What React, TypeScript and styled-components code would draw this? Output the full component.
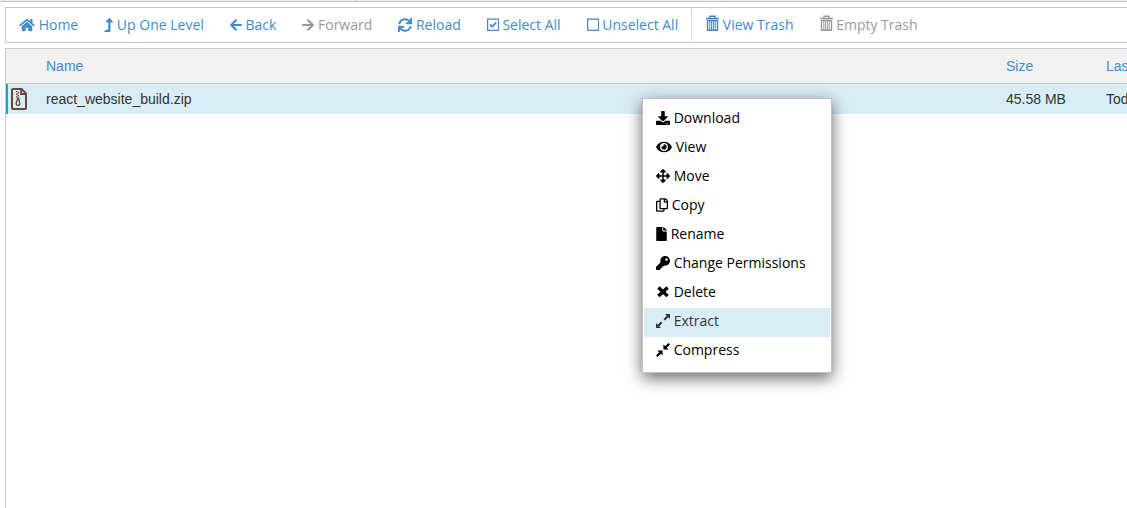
import React from "react";
import styled, { createGlobalStyle } from "styled-components";
import {
  FaHome,
  FaLevelUpAlt,
  FaArrowLeft,
  FaArrowRight,
  FaDownload,
  FaEye,
  FaArrowsAlt,
  FaRegCopy,
  FaFile,
  FaKey,
  FaSync,
} from "react-icons/fa";

const GlobalStyle = createGlobalStyle`
  *, *::before, *::after { box-sizing: border-box; }
  html { height: 100%; }
  body { margin: 0; height: 100%; background: #fff; overflow: hidden; }
  #root { height: 100%; }
`;

const Page = styled.div`
  position: relative;
  display: flex;
  flex-direction: column;
  height: 100%;
  overflow: hidden;
  color: #333;
  font-family: "Liberation Sans", Arial, sans-serif;
  font-size: 14px;
`;

const TopStrip = styled.div`
  display: grid;
  grid-template-columns: 357px 366px 1fr;
  flex: none;
  height: 2px;
  background: #ededed;
  border-bottom: 1px solid #c6c6c6;
`;

const StripCell = styled.span`
  border-right: 1px solid #ccc;
`;

const Toolbar = styled.nav`
  display: flex;
  flex: none;
  height: 36px;
  margin: 5px 0 0 5px;
  border: 1px solid #c8c8c8;
  border-right: 0;
`;

const ToolButton = styled.button`
  padding: 0 13px;
  border: 0;
  background: none;
  color: #428bca;
  font: 14px/20px "Open Sans", sans-serif;
  white-space: nowrap;
  cursor: pointer;
  &:disabled {
    color: #999;
    cursor: default;
  }
`;

const ToolGroup = styled.div`
  display: flex;
  & + & {
    padding-left: 1px;
    border-left: 1px dotted #bbb;
  }
`;

const Glyph = styled.span<{ $width: number; $height: number }>`
  display: inline-block;
  vertical-align: -2px;
  width: ${(p) => p.$width}px;
  height: ${(p) => p.$height}px;
  svg {
    display: block;
    width: 100%;
    height: 100%;
  }
`;

const Files = styled.main`
  flex: 1;
  margin: 5px 0 0 5px;
  border: 1px solid #c8c8c8;
  border-width: 1px 0 0 1px;
  overflow: hidden;
`;

const FileTable = styled.table`
  width: calc(100% + 84px);
  table-layout: fixed;
  border-collapse: separate;
  border-spacing: 0;
`;

const HeadCell = styled.th<{ $width?: number }>`
  width: ${(p) => (p.$width ? `${p.$width}px` : "auto")};
  height: 35px;
  padding: 0;
  background: #f1f1f1;
  border-bottom: 1px solid #c8c8c8;
  color: #428bca;
  font-weight: 400;
  text-align: left;
`;

const FileRow = styled.tr`
  background: #d9edf7;
`;

const Cell = styled.td`
  height: 30px;
  padding: 0;
  white-space: nowrap;
`;

const IconCell = styled(Cell)`
  border-left: 2px solid #1f9fd0;
  padding-left: 3px;
  svg {
    display: block;
  }
`;

const Menu = styled.div`
  position: absolute;
  left: 642px;
  top: 98px;
  width: 190px;
  padding: 6px 1px;
  border: 1px solid #c4c2b8;
  background: #fff;
  box-shadow: 0 5px 15px rgba(0, 0, 0, 0.6);
`;

const MenuItem = styled.button<{ $active?: boolean }>`
  display: block;
  width: 100%;
  height: 29px;
  padding: 0 12px 4px;
  border: 0;
  background: ${(p) => (p.$active ? "#d9edf7" : "transparent")};
  color: ${(p) => (p.$active ? "#333" : "#000")};
  font: 14px/20px "Open Sans", sans-serif;
  text-align: left;
  white-space: nowrap;
  cursor: pointer;
`;

const SquareIcon = ({ checked = false }: { checked?: boolean }) => (
  <svg viewBox="0 0 12 14" fill="none" stroke="currentColor" aria-hidden="true">
    <rect x="0.6" y="1.1" width="11" height="11.2" strokeWidth="1.3" />
    {checked && <path d="M3 6.4 5.3 8.7 9.2 4.4" strokeWidth="1.7" />}
  </svg>
);

const TrashIcon = () => (
  <svg viewBox="0 0 13 17" fill="none" stroke="currentColor" aria-hidden="true">
    <path d="M0 3.5H13M4 3V1.3H9V3" strokeWidth="1.4" />
    <path d="M1.5 5.5H11.5V15.3H1.5Z" strokeWidth="1.4" />
    <path d="M3.8 5.5V15M5.6 5.5V15M7.4 5.5V15M9.2 5.5V15" strokeWidth="1" />
  </svg>
);

const CrossIcon = () => (
  <svg viewBox="0 0 14 14" stroke="currentColor" aria-hidden="true">
    <path d="M2.4 2.4 11.6 11M11.6 2.4 2.4 11" strokeWidth="3.4" />
  </svg>
);

const ExpandIcon = () => (
  <svg viewBox="0 0 14 14" fill="currentColor" stroke="currentColor" aria-hidden="true">
    <path d="M9 0H14V5ZM0 9V14H5Z" stroke="none" />
    <path d="M12 2 8.3 5.7M2 12 5.7 8.3" strokeWidth="2.2" />
  </svg>
);

const CompressIcon = () => (
  <svg viewBox="0 0 14 14" fill="currentColor" stroke="currentColor" aria-hidden="true">
    <path d="M7.4 1.4V6.6H12.6ZM1.4 7.4H6.6V12.6Z" stroke="none" />
    <path d="M9 5 13.2 0.8M5 9 0.8 13.2" strokeWidth="2.2" />
  </svg>
);

const ZipIcon = () => (
  <svg width="16" height="22" viewBox="0 0 16 22" fill="none" stroke="#6b4533" aria-hidden="true">
    <path d="M2 1H10.5L15 5.5V20Q15 21 14 21H2Q1 21 1 20V2Q1 1 2 1Z" strokeWidth="2" />
    <path d="M10 1V6H15" strokeWidth="1.8" />
    <path d="M5.8 3V11M7.4 4.3V12" strokeWidth="1.5" strokeDasharray="1.3 1.3" />
    <path d="M6.8 10.5 5.2 15Q5 17.3 7 17.3T8.8 15L7.6 10.5Z" strokeWidth="1.3" />
  </svg>
);

type Item = {
  label: string;
  icon: React.ReactNode;
  width: number;
  height?: number;
  disabled?: boolean;
  active?: boolean;
};

const navTools: Item[] = [
  { label: "Home", icon: <FaHome />, width: 16 },
  { label: "Up One Level", icon: <FaLevelUpAlt />, width: 9 },
  { label: "Back", icon: <FaArrowLeft />, width: 12 },
  { label: "Forward", icon: <FaArrowRight />, width: 12, disabled: true },
  { label: "Reload", icon: <FaSync />, width: 14 },
  { label: "Select All", icon: <SquareIcon checked />, width: 12 },
  { label: "Unselect All", icon: <SquareIcon />, width: 12 },
];

const trashTools: Item[] = [
  { label: "View Trash", icon: <TrashIcon />, width: 13, height: 17 },
  { label: "Empty Trash", icon: <TrashIcon />, width: 13, height: 17, disabled: true },
];

const menuItems: Item[] = [
  { label: "Download", icon: <FaDownload />, width: 14 },
  { label: "View", icon: <FaEye />, width: 16 },
  { label: "Move", icon: <FaArrowsAlt />, width: 14 },
  { label: "Copy", icon: <FaRegCopy />, width: 12 },
  { label: "Rename", icon: <FaFile />, width: 11 },
  { label: "Change Permissions", icon: <FaKey />, width: 14 },
  { label: "Delete", icon: <CrossIcon />, width: 14 },
  { label: "Extract", icon: <ExpandIcon />, width: 14, active: true },
  { label: "Compress", icon: <CompressIcon />, width: 14 },
];

const Caption = ({ item }: { item: Item }) => (
  <>
    <Glyph $width={item.width} $height={item.height ?? 14}>
      {item.icon}
    </Glyph>{" "}
    {item.label}
  </>
);

const Tools = ({ items }: { items: Item[] }) => (
  <ToolGroup>
    {items.map((t) => (
      <ToolButton key={t.label} type="button" disabled={t.disabled}>
        <Caption item={t} />
      </ToolButton>
    ))}
  </ToolGroup>
);

export default function App() {
  return (
    <Page>
      <GlobalStyle />
      <TopStrip>
        <StripCell />
        <StripCell />
      </TopStrip>
      <Toolbar>
        <Tools items={navTools} />
        <Tools items={trashTools} />
      </Toolbar>
      <Files>
        <FileTable>
          <thead>
            <tr>
              <HeadCell $width={40} />
              <HeadCell>Name</HeadCell>
              <HeadCell $width={100}>Size</HeadCell>
              <HeadCell $width={105}>Last Modified</HeadCell>
            </tr>
          </thead>
          <tbody>
            <FileRow>
              <IconCell>
                <ZipIcon />
              </IconCell>
              <Cell>react_website_build.zip</Cell>
              <Cell>45.58 MB</Cell>
              <Cell>Today</Cell>
            </FileRow>
          </tbody>
        </FileTable>
      </Files>
      <Menu role="menu">
        {menuItems.map((m) => (
          <MenuItem key={m.label} type="button" role="menuitem" $active={m.active}>
            <Caption item={m} />
          </MenuItem>
        ))}
      </Menu>
    </Page>
  );
}
